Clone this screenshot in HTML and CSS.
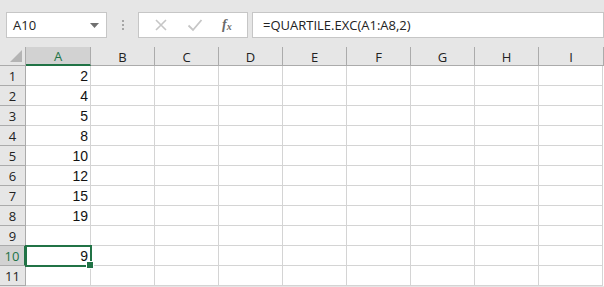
FILE: index.html
```html
<!DOCTYPE html>
<html>
<head>
<meta charset="utf-8">
<link rel="stylesheet" href="styles.css">
</head>
<body>
<div class="app">
  <div class="toolbar">
    <div class="namebox">
      <span class="nametext">A10</span>
      <svg class="caret" width="9" height="5" viewBox="0 0 9 5"><path d="M0 0H9L4.5 5Z" fill="#707070"/></svg>
    </div>
    <div class="dots"><i></i><i></i><i></i></div>
    <div class="btnbox">
      <svg class="ico" width="14" height="14" viewBox="0 0 14 14"><path d="M2 2L12 12M12 2L2 12" stroke="#c6c6c6" stroke-width="1.6" fill="none"/></svg>
      <svg class="ico" width="16" height="14" viewBox="0 0 16 14"><path d="M1.5 7.5L6 12L14.5 2" stroke="#c6c6c6" stroke-width="1.8" fill="none"/></svg>
      <span class="fx">f<sub>x</sub></span>
    </div>
    <div class="formula">=QUARTILE.EXC(A1:A8,2)</div>
  </div>
  <div class="sheet">
    <div class="corner"><span class="tri"></span></div>
    <div class="ch sel">A</div><div class="ch">B</div><div class="ch">C</div><div class="ch">D</div><div class="ch">E</div><div class="ch">F</div><div class="ch">G</div><div class="ch">H</div><div class="ch">I</div>

    <div class="rh">1</div><div class="c num">2</div><div class="c"></div><div class="c"></div><div class="c"></div><div class="c"></div><div class="c"></div><div class="c"></div><div class="c"></div><div class="c"></div>
    <div class="rh">2</div><div class="c num">4</div><div class="c"></div><div class="c"></div><div class="c"></div><div class="c"></div><div class="c"></div><div class="c"></div><div class="c"></div><div class="c"></div>
    <div class="rh">3</div><div class="c num">5</div><div class="c"></div><div class="c"></div><div class="c"></div><div class="c"></div><div class="c"></div><div class="c"></div><div class="c"></div><div class="c"></div>
    <div class="rh">4</div><div class="c num">8</div><div class="c"></div><div class="c"></div><div class="c"></div><div class="c"></div><div class="c"></div><div class="c"></div><div class="c"></div><div class="c"></div>
    <div class="rh">5</div><div class="c num">10</div><div class="c"></div><div class="c"></div><div class="c"></div><div class="c"></div><div class="c"></div><div class="c"></div><div class="c"></div><div class="c"></div>
    <div class="rh">6</div><div class="c num">12</div><div class="c"></div><div class="c"></div><div class="c"></div><div class="c"></div><div class="c"></div><div class="c"></div><div class="c"></div><div class="c"></div>
    <div class="rh">7</div><div class="c num">15</div><div class="c"></div><div class="c"></div><div class="c"></div><div class="c"></div><div class="c"></div><div class="c"></div><div class="c"></div><div class="c"></div>
    <div class="rh">8</div><div class="c num">19</div><div class="c"></div><div class="c"></div><div class="c"></div><div class="c"></div><div class="c"></div><div class="c"></div><div class="c"></div><div class="c"></div>
    <div class="rh">9</div><div class="c num"></div><div class="c"></div><div class="c"></div><div class="c"></div><div class="c"></div><div class="c"></div><div class="c"></div><div class="c"></div><div class="c"></div>
    <div class="rh sel">10</div><div class="c num active">9<span class="handle"></span></div><div class="c"></div><div class="c"></div><div class="c"></div><div class="c"></div><div class="c"></div><div class="c"></div><div class="c"></div><div class="c"></div>
    <div class="rh">11</div><div class="c num"></div><div class="c"></div><div class="c"></div><div class="c"></div><div class="c"></div><div class="c"></div><div class="c"></div><div class="c"></div><div class="c"></div>
  </div>
</div>
</body>
</html>
```
FILE: styles.css
```css
* { box-sizing: border-box; }
html, body { margin: 0; padding: 0; background: #e6e6e6; }
.app { width: 604px; height: 287px; overflow: hidden; background: #e6e6e6; }

.toolbar {
  height: 47px;
  display: flex;
  align-items: flex-start;
  padding: 11px 0 0 6px;
  border-top: 1px solid #e6e6e6;
}
.namebox {
  width: 101px; height: 26px;
  background: #fff;
  border: 1px solid #c6c6c6;
  display: flex; align-items: center; justify-content: space-between;
  padding: 0 7px 0 6px;
  font-family: "Open Sans", "Noto Sans", sans-serif;
  font-size: 13px; color: #222;
}
.caret { margin-top: 1px; }
.dots {
  width: 31px; height: 26px;
  display: flex; flex-direction: column; align-items: center; justify-content: center; gap: 2px;
}
.dots i { display: block; width: 2px; height: 2px; background: #a6a6a6; }
.btnbox {
  width: 110px; height: 26px;
  background: #fff;
  border: 1px solid #c6c6c6;
  display: flex; align-items: center;
  padding-left: 15px;
  gap: 19px;
}
.fx {
  font-family: "Liberation Serif", serif;
  font-style: italic; font-weight: bold;
  font-size: 14px; color: #6a6a6a;
  margin-left: 0px;
  line-height: 1;
}
.fx sub { font-size: 10px; vertical-align: -1px; }
.formula {
  margin-left: 4px;
  flex: 1;
  height: 26px;
  background: #fff;
  border: 1px solid #c6c6c6;
  border-right: 1px solid #c6c6c6;
  padding-left: 10px;
  display: flex; align-items: center;
  font-family: "Open Sans", "Noto Sans", sans-serif;
  font-size: 13px; color: #222;
}

.sheet {
  display: grid;
  grid-template-columns: 26px 65px repeat(8, 64px) 1fr;
  grid-template-rows: 19px repeat(11, 20px);
  background: #fff;
}
.corner {
  grid-column: 1;
  background: #e6e6e6;
  border-right: 1px solid #ababab;
  border-bottom: 1px solid #ababab;
  position: relative;
}
.tri {
  position: absolute; right: 3px; bottom: 3px;
  width: 0; height: 0;
  border-left: 12px solid transparent;
  border-bottom: 12px solid #b4b4b4;
}
.ch {
  background: #e6e6e6;
  border-right: 1px solid #ababab;
  border-bottom: 1px solid #ababab;
  font-family: "Open Sans", "Noto Sans", sans-serif;
  font-size: 13px; color: #222;
  display: flex; align-items: center; justify-content: center;
  padding-top: 1px;
}
.ch.sel { background: #d2d2d2; color: #217346; border-bottom: 2px solid #217346; }
.sheet > .ch:nth-child(10) { grid-column: 10 / span 2; border-right: 1px solid #ababab; }
.rh {
  grid-column: 1;
  background: #e6e6e6;
  border-right: 1px solid #ababab;
  border-bottom: 1px solid #ababab;
  font-family: "Open Sans", "Noto Sans", sans-serif;
  font-size: 13px; color: #222;
  display: flex; align-items: center; justify-content: center;
}
.rh.sel { background: #d2d2d2; color: #217346; border-right: 2px solid #217346; }
.c {
  border-right: 1px solid #d4d4d4;
  border-bottom: 1px solid #d4d4d4;
  background: #fff;
}
.sheet > .c:nth-child(10n + 11) { grid-column: 10 / span 2; }
.num {
  font-family: "Liberation Sans", Arial, sans-serif;
  font-size: 14px; color: #111;
  display: flex; align-items: center; justify-content: flex-end;
  padding-right: 2px;
}
.active {
  position: relative;
  outline: 2px solid #217346;
  outline-offset: -1px;
  z-index: 2;
}
.handle {
  position: absolute; right: -4px; bottom: -4px;
  width: 6px; height: 6px;
  background: #217346;
  border: 1px solid #fff;
  box-sizing: content-box;
}
```
